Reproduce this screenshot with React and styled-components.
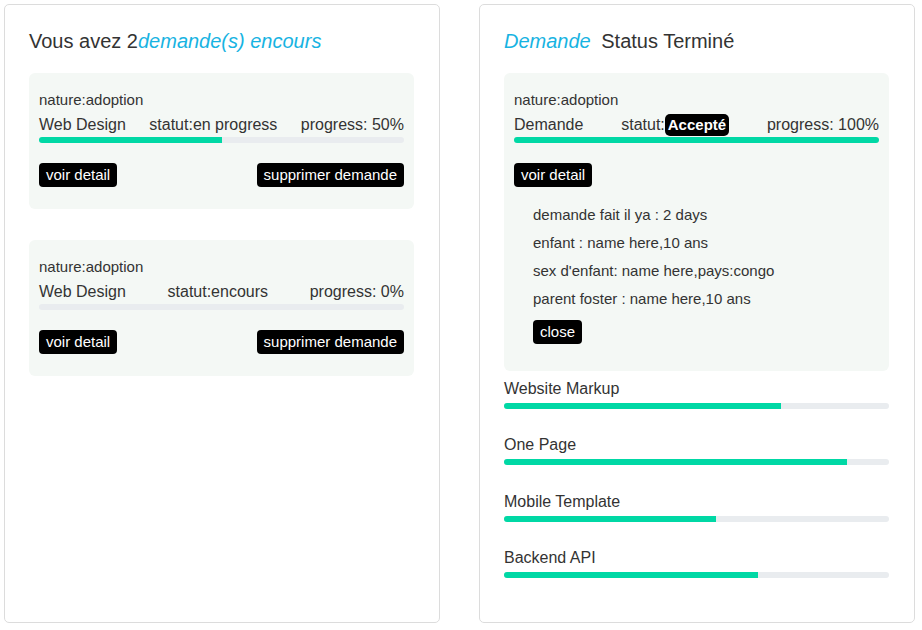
import React from 'react'
import styled, { createGlobalStyle } from 'styled-components'

const Global = createGlobalStyle`
body{margin:0;background:#fff;font-family:"Liberation Sans",Arial,sans-serif;color:#333;}
*{box-sizing:border-box;}
`
const Page = styled.div`
display:flex;gap:39px;padding:4px;
`
const Card = styled.div`
width:436px;height:619px;border:1px solid #dcdcdc;border-radius:5px;padding:24px 25px 24px 24px;background:#fff;
`
const Title = styled.h2`
margin:0 0 20px;font-size:20px;line-height:24px;font-weight:normal;color:#333;
`
const Accent = styled.span`
font-style:italic;color:#17b3e2;margin-right:${p => p.gap || 0}px;
`
const Box = styled.div`
background:#f4f8f5;border-radius:6px;padding:17px 10px ${p => p.bottom || 22}px;margin-bottom:${p => p.mb || 0}px;
`
const Nature = styled.div`
font-size:15px;line-height:20px;
`
const Row = styled.div`
display:flex;justify-content:space-between;align-items:center;height:20px;margin-top:5px;font-size:16px;
`
const Badge = styled.span`
display:inline-block;background:#000;color:#fff;font-weight:bold;font-size:15px;line-height:22px;padding:0 3px;border-radius:5px;
`
const Track = styled.div`
height:6px;border-radius:3px;background:#e9ecef;overflow:hidden;margin-top:${p => p.mt || 2}px;
`
const Fill = styled.div`
height:100%;background:#00d8a5;
`
const Actions = styled.div`
display:flex;justify-content:space-between;margin-top:20px;
`
const Btn = styled.button`
font-family:inherit;font-size:15px;line-height:24px;height:24px;padding:0 7px;border:none;border-radius:4px;background:#000;color:#fff;cursor:pointer;
`
const Details = styled.div`
padding-left:19px;margin-top:14px;
`
const Line = styled.div`
font-size:15px;line-height:28px;
`
const Close = styled(Btn)`
margin-top:7px;margin-bottom:5px;
`
const Skill = styled.div`
margin-top:${p => p.first ? 8 : 26.4}px;
`
const SkillLabel = styled.div`
font-size:16px;line-height:20px;
`

function Progress({ value, mt }) {
  return (
    <Track mt={mt}>
      <Fill style={{ width: `${value}%` }} />
    </Track>
  )
}

const requests = [
  { name: 'Web Design', statut: 'en progress', progress: 50 },
  { name: 'Web Design', statut: 'encours', progress: 0 },
]

const skills = [
  { name: 'Website Markup', value: 72 },
  { name: 'One Page', value: 89 },
  { name: 'Mobile Template', value: 55 },
  { name: 'Backend API', value: 66 },
]

export default function App() {
  return (
    <>
      <Global />
      <Page>
        <Card>
          <Title>Vous avez 2<Accent>demande(s) encours</Accent></Title>
          {requests.map((r, i) => (
            <Box key={i} mb={31}>
              <Nature>nature:adoption</Nature>
              <Row>
                <span>{r.name}</span>
                <span>statut:{r.statut}</span>
                <span>progress: {r.progress}%</span>
              </Row>
              <Progress value={r.progress} />
              <Actions>
                <Btn>voir detail</Btn>
                <Btn>supprimer demande</Btn>
              </Actions>
            </Box>
          ))}
        </Card>
        <Card>
          <Title><Accent gap={5}>Demande</Accent> Status Terminé</Title>
          <Box>
            <Nature>nature:adoption</Nature>
            <Row>
              <span>Demande</span>
              <span>statut:<Badge>Accepté</Badge></span>
              <span>progress: 100%</span>
            </Row>
            <Progress value={100} />
            <Actions>
              <Btn>voir detail</Btn>
            </Actions>
            <Details>
              <Line>demande fait il ya : 2 days</Line>
              <Line>enfant : name here,10 ans</Line>
              <Line>sex d'enfant: name here,pays:congo</Line>
              <Line>parent foster : name here,10 ans</Line>
              <Close>close</Close>
            </Details>
          </Box>
          {skills.map((s, i) => (
            <Skill key={s.name} first={i === 0}>
              <SkillLabel>{s.name}</SkillLabel>
              <Progress value={s.value} mt={4} />
            </Skill>
          ))}
        </Card>
      </Page>
    </>
  )
}
